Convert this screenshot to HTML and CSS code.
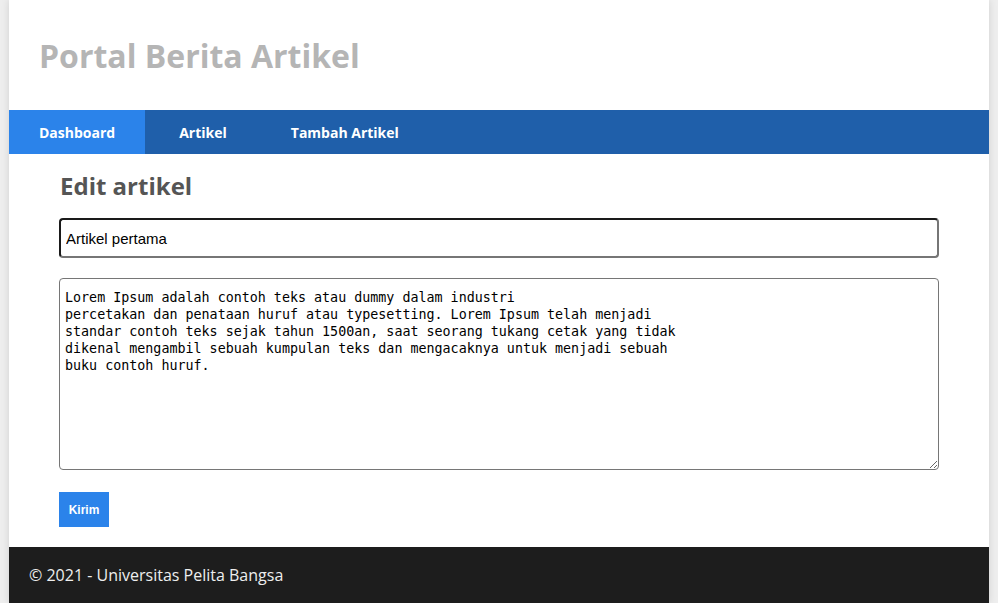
FILE: index.html
```html
<!DOCTYPE html>
<html lang="id">
<head>
<meta charset="utf-8">
<title>Portal Berita Artikel</title>
<link rel="stylesheet" href="styles.css">
</head>
<body>
<div class="container">
  <header class="header">
    <h1 class="site-title">Portal Berita Artikel</h1>
  </header>
  <nav class="nav">
    <a class="nav-item active" href="#">Dashboard</a>
    <a class="nav-item" href="#">Artikel</a>
    <a class="nav-item" href="#">Tambah Artikel</a>
  </nav>
  <main class="content">
    <h2 class="page-title">Edit artikel</h2>
    <form class="form">
      <input class="field-input" type="text" value="Artikel pertama">
      <textarea class="field-textarea">Lorem Ipsum adalah contoh teks atau dummy dalam industri
percetakan dan penataan huruf atau typesetting. Lorem Ipsum telah menjadi
standar contoh teks sejak tahun 1500an, saat seorang tukang cetak yang tidak
dikenal mengambil sebuah kumpulan teks dan mengacaknya untuk menjadi sebuah
buku contoh huruf.</textarea>
      <button class="btn" type="button">Kirim</button>
    </form>
  </main>
  <footer class="footer">© 2021 - Universitas Pelita Bangsa</footer>
</div>
</body>
</html>
```
FILE: styles.css
```css
* { box-sizing: border-box; }
html, body { margin: 0; padding: 0; }
body {
  background: #eeeeee;
  font-family: "Open Sans", "Liberation Sans", sans-serif;
}
.container {
  width: 980px;
  margin: 0 auto;
  background: #ffffff;
  box-shadow: 0 0 8px rgba(0,0,0,0.12);
}
.header {
  height: 110px;
  display: flex;
  align-items: center;
  padding: 0 30px;
}
.site-title {
  margin: 0;
  font-size: 32px;
  font-weight: 700;
  color: #b5b5b5;
  line-height: 1;
  padding-top: 2px;
}
.nav {
  display: flex;
  gap: 4px;
  height: 44px;
  background: #1f5faa;
}
.nav-item {
  display: flex;
  align-items: center;
  padding: 0 30px;
  color: #ffffff;
  font-weight: 700;
  font-size: 14px;
  text-decoration: none;
}
.nav-item.active { background: #2b83ea; }
.content {
  padding: 17px 50px 20px 50px;
}
.page-title {
  margin: 0 0 17px 1px;
  font-size: 24px;
  font-weight: 700;
  color: #555555;
  line-height: 30px;
}
.form {
  display: flex;
  flex-direction: column;
  align-items: flex-start;
}
.field-input {
  width: 880px;
  height: 40px;
  border: 2px solid;
  border-color: #1a1a1a #767676 #767676 #1a1a1a;
  border-radius: 4px;
  padding: 0 5px;
  font-family: "Liberation Sans", Arial, sans-serif;
  font-size: 15px;
  color: #000;
  margin-bottom: 20px;
  outline: none;
}
.field-textarea {
  width: 880px;
  height: 192px;
  border: 1px solid #767676;
  border-radius: 4px;
  padding: 10px 5px;
  font-family: "DejaVu Sans Mono", monospace;
  font-size: 13.35px;
  line-height: 17px;
  color: #000;
  margin: 0 0 22px 0;
  resize: both;
}
.btn {
  width: 50px;
  height: 35px;
  border: none;
  background: #2b83ea;
  color: #ffffff;
  font-family: "Liberation Sans", Arial, sans-serif;
  font-weight: 700;
  font-size: 12px;
  padding: 0;
}
.footer {
  height: 56px;
  background: #1d1d1d;
  color: #eeeeee;
  font-size: 16px;
  display: flex;
  align-items: center;
  padding: 0 20px;
}
```
